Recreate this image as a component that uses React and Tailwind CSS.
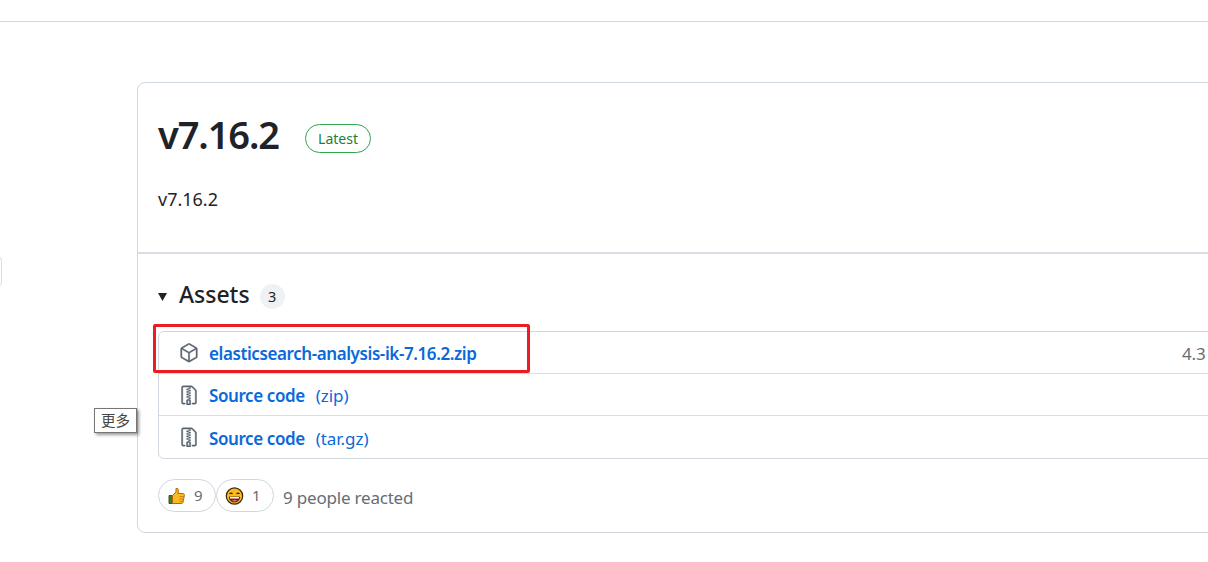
import React from "react";
import { GoPackage, GoFileZip } from "react-icons/go";

const ThumbsUp = () => (
  <svg width="20" height="20" viewBox="0 0 20 20">
    <path d="M2 9.5h3.5v8H2z" fill="#3f7d2a" stroke="#5a4a10" strokeWidth="1" />
    <path d="M5.5 9.5 9 6V2.5c1.6-.6 2.6.6 2.4 2.2L11 7.5h4.8c1.4 0 1.8 1.2 1.5 2.2l-1.3 6.6c-.2.9-.9 1.2-1.7 1.2H5.5z" fill="#fbb924" stroke="#a86a10" strokeWidth="1" />
    <path d="M12.5 10.5h4.5M12.5 13h4M12.5 15.3h3.5" stroke="#c98512" strokeWidth="1" />
  </svg>
);

const Grin = () => (
  <svg width="20" height="20" viewBox="0 0 20 20">
    <circle cx="9.5" cy="10" r="8.2" fill="#fbb924" stroke="#33291a" strokeWidth="1.2" />
    <path d="M4.5 8c.8-1.3 2.2-1.3 3 0M11.5 8c.8-1.3 2.2-1.3 3 0" fill="none" stroke="#33291a" strokeWidth="1.2" />
    <path d="M4.3 11h10.4c0 3-2.3 5-5.2 5s-5.200-2-5.200-5z" fill="#7a1f1f" stroke="#33291a" strokeWidth="0.8" />
    <path d="M5 11h9v1.500H5z" fill="#fff" />
    <path d="M7 14.500c1.500-1 3.500-1 5 0-1.500 1.200-3.500 1.200-5 0z" fill="#f0645a" />
  </svg>
);

const Reaction = ({ icon, count }) => (
  <div className="flex h-[33px] w-[58px] items-center rounded-full border border-[#d0d7de] pl-[8px]">
    {icon}
    <span className="ml-[7px] text-[15px] text-[#656d76]">{count}</span>
  </div>
);

const AssetRow = ({ icon, name, suffix, size, last }) => (
  <div className={`flex h-[42px] items-center pl-[20px] ${last ? "" : "border-b border-[#d8dee4]"}`}>
    <span className="flex w-[20px] justify-center text-[#57606a] [&_svg]:stroke-[0.5px]">{icon}</span>
    <span className="ml-[10px] mt-[3px] text-[17px] font-semibold tracking-[-0.41px] text-[#0969da]">{name}</span>
    {suffix && <span className="ml-[11px] mt-[3px] text-[17px] tracking-[-0.05px] text-[#0969da]">{suffix}</span>}
    {size && <span className="absolute left-[1023px] mt-[3px] whitespace-nowrap text-[17px] tracking-[-0.15px] text-[#656d76]">{size}</span>}
  </div>
);

export default function App() {
  return (
    <div className="relative h-[562px] w-[1208px] overflow-hidden bg-white font-['Noto_Sans','Noto_Sans_CJK_SC',sans-serif] text-[#1f2328]">
      <div className="h-[22px] border-b border-[#d0d7de]" />

      {/* cut off button on the left edge */}
      <div className="absolute left-[-10px] top-[255px] h-[33px] w-[12px] rounded-md border border-[#d8dee4]" />

      <div className="pl-[137px] pt-[60px]">
        <div className="h-[451px] w-[1200px] rounded-l-lg border border-[#d0d7de]">
          <div className="h-[169px] px-[20px] pt-[24px]">
            <div className="flex h-[56px] items-center">
              <h1 className="mb-[2px] text-[38px] leading-none font-semibold tracking-[-1.1px]">v7.16.2</h1>
              <span className="ml-[26px] mt-[6px] flex h-[29px] w-[66px] items-center justify-center rounded-full border border-[#2da44e] text-[14px] text-[#1a7f37]">Latest</span>
            </div>
            <p className="mt-[22px] text-[18px] leading-[28px]">v7.16.2</p>
          </div>

          <div className="relative border-t-2 border-[#d8dee4] px-[20px]">
            <div className="flex h-[77px] items-center pt-[5px]">
              <svg width="9" height="9" viewBox="0 0 9 9" className="mt-[2px]">
                <path d="M0 1h9L4.500 9z" fill="#1f2328" />
              </svg>
              <h2 className="ml-[12px] mb-[2px] text-[23px] leading-none font-medium">Assets</h2>
              <span className="ml-[10px] mt-[3px] flex h-[25px] w-[25px] items-center justify-center rounded-full bg-[#eff2f5] text-[14.5px]">3</span>
            </div>

            <div className="relative w-[1200px] rounded-l-md border border-[#d0d7de]">
              <AssetRow icon={<GoPackage size={20} />} name="elasticsearch-analysis-ik-7.16.2.zip" size="4.3" />
              <AssetRow icon={<GoFileZip size={20} />} name="Source code" suffix="(zip)" />
              <AssetRow icon={<GoFileZip size={20} />} name="Source code" suffix="(tar.gz)" last />
            </div>

            <div className="mt-[20px] flex items-center">
              <Reaction icon={<ThumbsUp />} count="9" />
              <Reaction icon={<Grin />} count="1" />
              <span className="ml-[9px] mt-[5px] text-[17px] tracking-[-0.2px] text-[#656d76]">9 people reacted</span>
            </div>
          </div>
        </div>
      </div>

      {/* annotation drawn over the screenshot */}
      <div className="absolute left-[153px] top-[324px] h-[49px] w-[377px] rounded-[2px] border-[3px] border-[#ed1c24]" />

      {/* tooltip */}
      <div className="absolute left-[94px] top-[408px] flex h-[25px] w-[43px] items-center justify-center border border-[#767676] bg-white text-[14.5px] text-[#444] shadow-[2px_2px_3px_rgba(0,0,0,0.4)]">更多</div>
    </div>
  );
}
